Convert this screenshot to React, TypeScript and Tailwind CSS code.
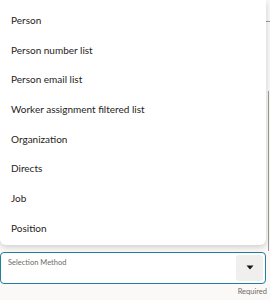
const options = [
  'Person',
  'Person number list',
  'Person email list',
  'Worker assignment filtered list',
  'Organization',
  'Directs',
  'Job',
  'Position',
];

export default function App() {
  return (
    <div
      className="relative h-[300px] w-[270px] overflow-hidden bg-[#fbf9f8] text-[#1f1d1b]"
      style={{ fontFamily: 'Lato, "Noto Sans", sans-serif' }}
    >
      {/* content behind the popup */}
      <div className="absolute right-0 top-[21px] h-px w-[4px] bg-[#9e9a96]" />
      <div className="absolute right-[1px] top-[91px] h-[160px] w-px bg-[#9e9a96]" />

      <div className="flex flex-col">
        <ul className="relative z-10 w-[266px] rounded-b-md bg-white pt-[5px] pb-[2px] shadow-[0_2px_6px_rgba(0,0,0,0.18)]">
          {options.map((o) => (
            <li key={o} className="flex h-[29.7px] items-center px-[11px] text-[10px] leading-none">
              {o}
            </li>
          ))}
        </ul>

        <div className="mt-[7px] flex h-[32px] w-[266px] items-stretch rounded-[4px] border border-[#227e9e] bg-white">
          <div className="flex-1 px-[7px] pt-[6px] text-[7.5px] leading-none text-[#6f6b67]">Selection Method</div>
          <div className="m-[2px] flex w-[27px] items-center justify-center rounded-[3px] bg-[#f1efed]">
            <svg width="8" height="5" viewBox="0 0 8 5">
              <path d="M0.5 0.5h7L4 4.5z" fill="#161513" />
            </svg>
          </div>
        </div>
        <div className="mt-[4px] w-[267px] text-right text-[7.5px] leading-none text-[#6f6b67]">Required</div>
      </div>
    </div>
  );
}
